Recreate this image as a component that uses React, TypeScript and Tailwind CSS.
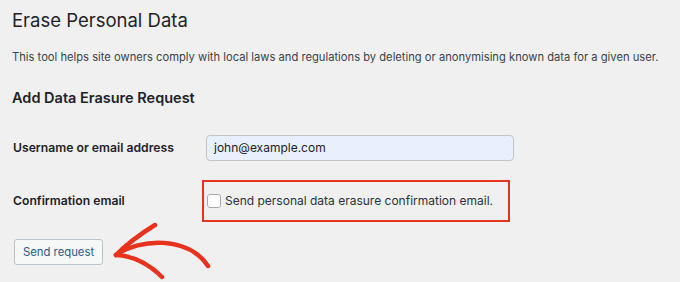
import React from 'react';

const font = { fontFamily: 'Inter, "Noto Sans", sans-serif' };

const Arrow: React.FC = () => (
  <svg
    className="pointer-events-none absolute left-0 top-0"
    width="680"
    height="282"
    viewBox="0 0 680 282"
    fill="none"
  >
    <g stroke="#e8321e" strokeWidth="4.5" strokeLinecap="round" strokeLinejoin="round">
      <path d="M116 255 C 140 238, 188 236, 208 266" />
      <path d="M116 255 C 128 243, 142 233, 155 225" />
      <path d="M116 255 C 135 256, 150 265, 162 277" />
    </g>
  </svg>
);

const App: React.FC = () => {
  return (
    <div className="relative h-[282px] w-[680px] overflow-hidden bg-[#f0f0f1] px-3 pt-[7px] text-[#1d2327]" style={font}>
      <h1 className="text-[18.5px] leading-[26px] font-normal">Erase Personal Data</h1>
      <p className="mt-[16px] text-[11.2px] leading-[16px] text-[#3c434a]">
        This tool helps site owners comply with local laws and regulations by deleting or anonymising known data for a given user.
      </p>
      <h2 className="mt-[23px] text-[14.5px] leading-[20px] font-semibold">Add Data Erasure Request</h2>

      <div className="mt-[27px] flex items-center">
        <label className="w-[190px] pl-px text-[12.2px] font-semibold">Username or email address</label>
        <div className="ml-[4px] flex h-[26px] w-[308px] items-center rounded-[4px] border border-[#c3c4c7] bg-[#e8f0fe] px-[7px] text-[12px]">
          john@example.com
        </div>
      </div>

      <div className="mt-[19px] flex items-center">
        <label className="w-[190px] pl-px text-[12.2px] font-semibold">Confirmation email</label>
        <div className="flex h-[42px] w-[308px] items-center border-2 border-[#e5341f] pl-[3px]">
          <span className="h-[14px] w-[14px] rounded-[3px] border border-[#a7aaad] bg-white" />
          <span className="ml-[4px] text-[12px] text-[#2c3338]">Send personal data erasure confirmation email.</span>
        </div>
      </div>

      <button className="ml-[2px] mt-[17px] flex h-[26px] items-center rounded-[3px] border border-[#b7c3cf] bg-[#f6f7f7] px-[8px] text-[11.3px] text-[#2a5a8c]">
        Send request
      </button>

      <Arrow />
    </div>
  );
};

export default App;
